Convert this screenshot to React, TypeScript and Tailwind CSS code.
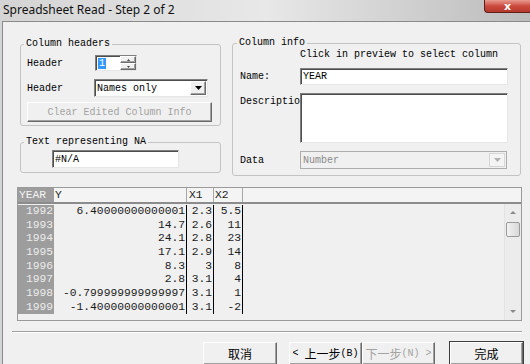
import React from "react";

const MONO = "font-['Liberation_Mono','Courier_New',monospace]";
const CJK = "font-['Noto_Sans_CJK_SC','Noto_Sans',sans-serif]";

const rows: [string, string, string, string][] = [
  ["1992", "6.40000000000001", "2.3", "5.5"],
  ["1993", "14.7", "2.6", "11"],
  ["1994", "24.1", "2.8", "23"],
  ["1995", "17.1", "2.9", "14"],
  ["1996", "8.3", "3", "8"],
  ["1997", "2.8", "3.1", "4"],
  ["1998", "-0.799999999999997", "3.1", "1"],
  ["1999", "-1.40000000000001", "3.1", "-2"],
];

const sunken =
  "bg-white border border-t-[#7f7f7f] border-l-[#7f7f7f] border-r-[#e6e6e6] border-b-[#e6e6e6] shadow-[inset_1px_1px_0_#4d4d4d]";
const raised =
  "bg-[#f0f0f0] border border-t-white border-l-white border-r-[#6a6a6a] border-b-[#6a6a6a] shadow-[inset_-1px_-1px_0_#a0a0a0]";

function GroupBox({ title, className, children }: { title: string; className: string; children: React.ReactNode }) {
  return (
    <fieldset className={`border border-[#c3c3c3] rounded-[3px] ${className}`}>
      <legend className="-ml-[3px] px-[2px] leading-[12px] text-[10px]">{title}</legend>
      {children}
    </fieldset>
  );
}

function Arrow({ up, color = "#000", w = 7, h = 4 }: { up?: boolean; color?: string; w?: number; h?: number }) {
  return (
    <svg width={w} height={h} viewBox={`0 0 ${w} ${h}`}>
      <polygon points={up ? `0,${h} ${w},${h} ${w / 2},0` : `0,0 ${w},0 ${w / 2},${h}`} fill={color} />
    </svg>
  );
}

export default function App() {
  return (
    <div className={`w-[530px] h-[364px] overflow-hidden bg-[#d3d6d9] ${MONO} text-[10px] text-black`}>
      {/* title bar */}
      <div className="h-[21px] flex bg-linear-to-r from-[#d4d4d4] via-[#e8e8e8] to-[#bcbcbc]">
        <span className="pl-[3px] pt-[2px] font-['Noto_Sans',sans-serif] text-[12px] leading-[16px] text-[#111]">
          Spreadsheet Read - Step 2 of 2
        </span>
        <div className="ml-auto w-[46px] h-[13px] rounded-bl-[4px] border-l border-b border-[#5e2018] bg-linear-to-b from-[#e59a8f] via-[#cc4a3e] to-[#b5382c] flex items-center justify-center">
          <span className="font-['DejaVu_Sans',sans-serif] font-bold text-[11px] leading-[11px] text-white">x</span>
        </div>
      </div>

      {/* body */}
      <div className="ml-[2px] h-[343px] border-l border-t border-[#8a8a8a] bg-[#f0f0f0] pl-[14px]">
        <div className="flex pl-[3px] pt-[16px]">
          <div className="w-[201px] flex flex-col gap-[10px]">
            <GroupBox title="Column headers" className="h-[88px] px-[6px] pt-[5px]">
              <div className="flex items-center h-[16px]">
                <span className="w-[68px]">Header</span>
                <div className={`${sunken} w-[42px] h-[16px] flex items-center`}>
                  <div className="flex-1 pl-[2px] flex items-center">
                    <span className="bg-[#3399ff] text-white leading-[11px] px-[1px]">1</span>
                  </div>
                  <div className="w-[16px] h-full flex flex-col">
                    <div className={`${raised} flex-1 flex items-center justify-center`}>
                      <Arrow up w={3} h={2} color="#444" />
                    </div>
                    <div className={`${raised} flex-1 flex items-center justify-center`}>
                      <Arrow w={3} h={2} color="#444" />
                    </div>
                  </div>
                </div>
              </div>
              <div className="flex items-center h-[18px] mt-[8px]">
                <span className="w-[67px]">Header</span>
                <div className={`${sunken} w-[114px] h-[18px] flex items-center`}>
                  <span className="flex-1 pl-[2px] text-[10px]">Names only</span>
                  <div className={`${raised} w-[16px] h-[14px] mr-[1px] flex items-center justify-center`}>
                    <Arrow w={7} h={4} />
                  </div>
                </div>
              </div>
              <div className={`${raised} mt-[5px] w-[185px] h-[20px] flex items-center justify-center text-[#a3a3a3]`}>
                Clear Edited Column Info
              </div>
            </GroupBox>

            <GroupBox title="Text representing NA" className="h-[37px] px-[6px] pt-[2px]">
              <div className={`${sunken} ml-[25px] w-[127px] h-[18px] flex items-center pl-[2px]`}>#N/A</div>
            </GroupBox>
          </div>

          <GroupBox title="Column info" className="ml-[11px] -mt-[1px] w-[289px] h-[139px] pl-[7px]">
            <div className="pl-[60px] leading-[12px]">Click in preview to select column</div>
            <div className="flex items-center mt-[7px]">
              <span className="w-[60px]">Name:</span>
              <div className={`${sunken} w-[208px] h-[17px] flex items-center pl-[2px]`}>YEAR</div>
            </div>
            <div className="flex mt-[8px]">
              <span className="w-[60px] pt-[1px] whitespace-nowrap">Descriptio</span>
              <div className={`${sunken} w-[208px] h-[50px]`} />
            </div>
            <div className="flex items-center mt-[8px]">
              <span className="w-[60px]">Data</span>
              <div className="w-[207px] h-[18px] border border-[#adadad] bg-[#f0f0f0] flex items-center">
                <span className="flex-1 pl-[2px] text-[#8a8a8a]">Number</span>
                <div className="w-[16px] h-[14px] mr-[1px] border border-[#d6d6d6] bg-[#f4f4f4] flex items-center justify-center">
                  <Arrow w={7} h={4} color="#b0b0b0" />
                </div>
              </div>
            </div>
          </GroupBox>
        </div>

        {/* preview grid */}
        <div className="mt-[11px] w-[505px] h-[134px] border border-[#9a9a9a] flex flex-col text-[11.3px] text-[#1c1c1c]">
          <div className="h-[16px] flex border-b-2 border-[#8c8c8c] bg-[#f4f4f4] leading-[14px]">
            <div className="w-[36px] bg-[#9d9d9d] text-[#f4f4f4] pl-[1px]">YEAR</div>
            <div className="w-[133px] border-r border-[#a8a8a8] pl-[1px]">Y</div>
            <div className="w-[27px] border-r border-[#a8a8a8] pl-[2px]">X1</div>
            <div className="w-[29px] border-r border-[#a8a8a8] pl-[1px]">X2</div>
            <div className="flex-1" />
          </div>
          <div className="flex flex-1 min-h-0">
            <div className="flex-1 pt-[1px]">
              {rows.map((r) => (
                <div key={r[0]} className="flex h-[13.67px] leading-[13.67px]">
                  <div className="w-[36px] bg-[#9d9d9d] text-[#ececec] text-right pr-[1px]">{r[0]}</div>
                  <div className="w-[133px] border-r border-black text-right pr-[1px]">{r[1]}</div>
                  <div className="w-[27px] border-r border-black text-right pr-[1px]">{r[2]}</div>
                  <div className="w-[29px] border-r border-black text-right pr-[1px]">{r[3]}</div>
                </div>
              ))}
            </div>
            <div className="w-[17px] bg-[#ececec] border-l border-[#e2e2e2] flex flex-col items-center">
              <div className="h-[17px] flex items-center justify-center">
                <Arrow up w={6} h={3} color="#8a8a8a" />
              </div>
              <div className="w-[14px] h-[15px] mt-[1px] rounded-[2px] border border-[#9a9a9a] bg-linear-to-r from-[#f2f2f2] to-[#d8d8d8]" />
              <div className="flex-1" />
              <div className="h-[17px] flex items-center justify-center">
                <Arrow w={6} h={3} color="#8a8a8a" />
              </div>
            </div>
          </div>
        </div>

        {/* separator */}
        <div className="mt-[10px] -ml-[5px] w-[510px] border-t border-b border-t-[#a0a0a0] border-b-white" />

        {/* buttons */}
        <div className="mt-[9px] flex h-[23px]">
          <div className={`${raised} ml-[186px] w-[74px] h-[23px] flex items-center justify-center ${CJK} text-[12px]`}>取消</div>
          <div className={`${raised} ml-[12px] w-[73px] h-[23px] flex items-center justify-center`}>
            <span className="text-[10px]">&lt;&nbsp;</span>
            <span className={`${CJK} text-[12px]`}>上一步</span>
            <span className="text-[10px]">(B)</span>
          </div>
          <div className={`${raised} w-[73px] h-[23px] flex items-center justify-center text-[#a3a3a3]`}>
            <span className={`${CJK} text-[12px]`}>下一步</span>
            <span className="text-[10px]">(N)&nbsp;&gt;</span>
          </div>
          <div className={`${raised} ml-[15px] w-[73px] h-[23px] outline outline-1 outline-[#3c3c3c] flex items-center justify-center ${CJK} text-[12px]`}>完成</div>
        </div>
      </div>
    </div>
  );
}
